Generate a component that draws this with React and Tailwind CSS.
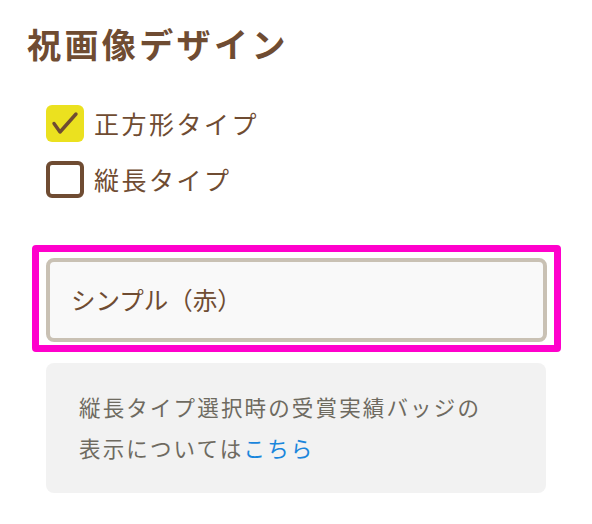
import React, { useState } from 'react';

const options = [
  { id: 'square', label: '正方形タイプ' },
  { id: 'vertical', label: '縦長タイプ' },
];

export default function App() {
  const [checked, setChecked] = useState({ square: true, vertical: false });

  const toggle = (id) => {
    setChecked(prev => ({ ...prev, [id]: !prev[id] }));
  };

  return (
    <div
      className="w-[592px] h-[524px] bg-white overflow-hidden"
      style={{ fontFamily: '"Noto Sans CJK JP", "Noto Sans", sans-serif' }}
    >
      {/* Title */}
      <h2 className="pl-[27px] pt-[19px] text-[34px] leading-[50px] font-bold tracking-[0.1em] text-[#6f4c32]">
        祝画像デザイン
      </h2>

      {/* Type checkboxes */}
      <div className="ml-[46px] mt-[36px] flex flex-col gap-[19px]">
        {options.map(opt => (
          <label key={opt.id} className="flex items-center gap-[10px] cursor-pointer">
            <span
              onClick={() => toggle(opt.id)}
              className={`w-[38px] h-[37px] rounded-[6px] flex items-center justify-center ${
                checked[opt.id] ? 'bg-[#ebe11f]' : 'border-[4px] border-[#6f4c32] bg-white'
              }`}
            >
              {checked[opt.id] && (
                <svg width="38" height="37" viewBox="0 0 38 37">
                  <path d="M8 18.5 L14 27 L30 9" fill="none" stroke="#6f4c32" strokeWidth="3.4" strokeLinecap="round" strokeLinejoin="round" />
                </svg>
              )}
            </span>
            <span className="text-[25px] leading-[37px] tracking-[0.1em] text-[#6f4c32]">{opt.label}</span>
          </label>
        ))}
      </div>

      {/* Design select */}
      <div className="ml-[32px] mt-[47px] w-[529px] border-[7px] border-[#ff00cc] rounded-[4px] pt-[6px] pb-[3px] px-[7px]">
        <div className="h-[84px] border-[4px] border-[#c9c1b4] rounded-[8px] bg-[#f9f9f9] flex items-center pl-[21px]">
          <span className="text-[24.5px] text-[#6f4c32]">シンプル（赤）</span>
        </div>
      </div>

      {/* Note */}
      <div className="ml-[46px] mt-[11px] w-[500px] h-[130px] bg-[#f2f2f2] rounded-[8px] pl-[33px] pt-[23px]">
        <p className="text-[21.5px] leading-[41px] tracking-[0.1em] text-[#6e6a60]">
          縦長タイプ選択時の受賞実績バッジの
          <br />
          表示については<a href="#" className="text-[#1a86dc]">こちら</a>
        </p>
      </div>
    </div>
  );
}
